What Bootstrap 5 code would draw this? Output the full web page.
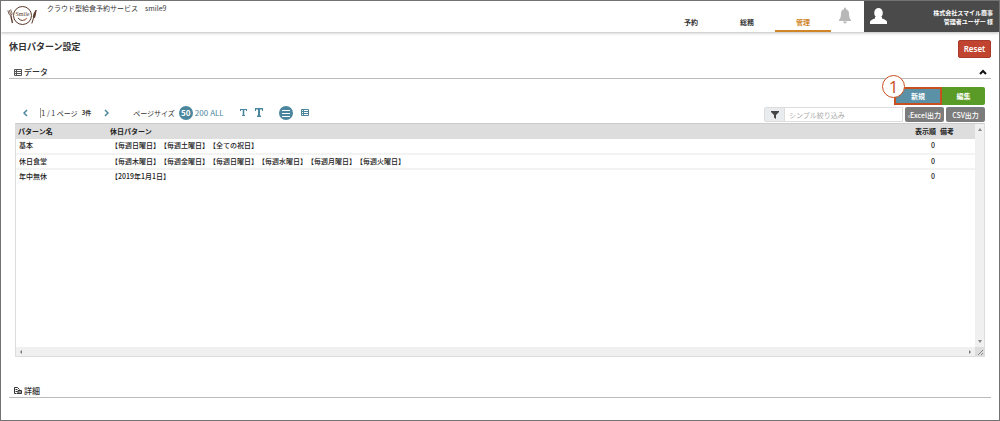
<!DOCTYPE html>
<html lang="ja">
<head>
<meta charset="utf-8">
<meta name="viewport" content="width=device-width, initial-scale=1">
<title>休日パターン設定</title>
<link href="https://cdn.jsdelivr.net/npm/bootstrap@5.3.0/dist/css/bootstrap.min.css" rel="stylesheet">
<style>
:root{--teal:#4a869d;--ink:#333;--orange:#c8501e}
body{font:7px/10px "Noto Sans CJK JP","Noto Sans",sans-serif;color:var(--ink);border:1px solid #737373;min-height:100vh;text-spacing-trim:space-all}
svg{display:block;flex:none}
.topbar{height:31px;box-shadow:0 1px 3px #bbb}
.topbar .brand-logo{margin:3px 10px 0 6px}
.service{padding-top:2px}
.mainnav .nav-link{width:56px;height:31px;padding:16px 0 0;text-align:center;color:#333;font-weight:700;line-height:10px;border-bottom:2px solid transparent}
.mainnav .nav-link.active{color:#d08528;border-color:#d08528}
.bell{width:33px;padding:6px 0 0 8px}
.userbox{width:135px;background:#4a4a4a;color:#fff;font-size:6px;line-height:9px;font-weight:700;padding:0 6px}
main{padding:8px 8px 0}
h1{font-size:9px;line-height:14px;font-weight:700;margin:0}
.flat{border:0;border-radius:2px;color:#fff;font-size:7px;line-height:10px;font-weight:700;padding:0;text-align:center}
.reset{background:#c0442f;border:1px solid #a93a29;width:33px;height:18px;font-size:8px;line-height:14px;font-family:"Noto Sans",sans-serif;font-weight:600}
.section-head{font-size:8px;line-height:12px;font-weight:500;border-bottom:1px solid #bbb;padding:0 4px 0 5px;margin:0;gap:2px}
.panel{padding:8px 6px 0}
.new-wrap{position:relative}
.new{background:#5a91a7;border:2px solid var(--orange);border-radius:0;width:48px;height:18px}
.edit{background:#5a9a27;width:43px;height:18px;border-radius:0 2px 2px 0}
.step{position:absolute;left:-12px;top:-12px;width:23px;height:23px;border:1px solid var(--orange);border-radius:50%;background:#fff;color:var(--orange);font:17px/21px "Open Sans",sans-serif;text-align:center}
.tools{height:17px;margin-top:1px;gap:2px}
.pager{height:14px;margin-bottom:4px}
.plain{border:0;background:none;padding:0;color:var(--teal);font-size:8px;line-height:10px}
.round{width:14px;height:14px;border-radius:50%;background:var(--teal);color:#fff;font-weight:700;display:flex;align-items:center;justify-content:center}
.pageno{width:5px;border:0;border-left:1px solid #999;padding:0;font-size:8px;line-height:10px;height:10px;color:#444}
.total{font-size:6px;font-weight:700}
.gap-a{margin-left:13px}
.gap-b{margin-left:2px}
.filter{width:139px;height:15px}
.filter .input-group-text{width:21px;padding:0 0 0 6px;background:#e9ecef;border-radius:2px 0 0 2px;border-color:#ddd}
.filter .form-control{font-size:7px;line-height:10px;padding:0 4px;border-color:#ddd;border-radius:0;min-height:0}
.filter .form-control::placeholder{color:#aaa}
.export{background:#7c7c7c;height:15px;width:39px;font-weight:500}
.gridbox{border:1px solid #ddd;border-top-color:#ccc;display:grid;grid-template-columns:1fr 9px;grid-template-rows:minmax(223px,1fr) 9px}
.grid-data{--bs-table-bg:transparent;margin:0;color:#222;font-weight:500;table-layout:fixed}
.grid-data th{background:#ddd;height:15px;padding:1px 2px;line-height:13px;border:0;font-weight:700}
.grid-data td{height:15px;padding:0 3px;line-height:13px;border:0;border-bottom:2px solid #f3f3f3}
.grid-data tr:last-child td{border-color:transparent}
.bar{background:#f0f0f0;color:#777}
.grip{background:#ddd}
.detail{margin-top:28px}
</style>
</head>
<body>
<header class="topbar d-flex">
  <svg class="brand-logo" width="30" height="24" viewBox="0 0 30 24" fill="none" stroke="#5b3a2b">
    <circle cx="15.500" cy="11.500" r="9" stroke-width="1"/>
    <path d="M11 14q4.500 5 9 0" stroke-width="1"/><path d="M16 16.500q3 0 4-2.500" stroke="#d98a6a"/>
    <path d="M.8 6.500l1.400 4q1.200 1.500 2.300.5t.2-2.500L3.600 5.500M2.200 6l1.400 4.500" stroke-width=".8"/><path d="M3.800 11.500l1.700 7.500" stroke-width="1.300"/>
    <path d="M29.200 6q-2.500 3-3 7l1.500.5zM26.800 13l-2 6.500" fill="#5b3a2b" stroke-width="1"/>
    <text x="15.500" y="12" text-anchor="middle" font-family="Liberation Serif,serif" font-size="6" fill="#5b3a2b" stroke="none">Smile</text>
  </svg>
  <div class="service">クラウド型給食予約サービス　smile9</div>
  <nav class="mainnav nav ms-auto flex-nowrap">
    <a class="nav-link" href="#">予約</a><a class="nav-link" href="#">総務</a><a class="nav-link active" href="#" aria-current="page">管理</a>
  </nav>
  <div class="bell"><svg width="12" height="17" viewBox="0 0 12 17" fill="#b8b8b8"><path d="M5 1.500a1 1 0 0 1 2 0v.7c2 .5 3 2 3 4.300 0 3 .5 5 2 6.500v1H0v-1c1.500-1.500 2-3.500 2-6.500 0-2.300 1-3.800 3-4.300zM4 14.500h4q-.5 2-2 2t-2-2z"/></svg></div>
  <div class="userbox d-flex align-items-center justify-content-between">
    <svg width="17" height="17" viewBox="0 0 17 17" fill="#fff"><ellipse cx="8.500" cy="5" rx="4.300" ry="5"/><path d="M0 16v-2q0-2 5-3.500V9h7v1.500q5 1.500 5 3.500v2z"/></svg>
    <div class="text-end">株式会社スマイル商事<br>管理者ユーザー 様</div>
  </div>
</header>
<main>
  <div class="d-flex justify-content-between">
    <h1>休日パターン設定</h1>
    <button class="flat reset" type="button">Reset</button>
  </div>
  <h2 class="section-head d-flex align-items-center mt-2">
    <svg width="8" height="7" viewBox="0 0 8 7" fill="none" stroke="#555"><path d="M.5.500h7v6h-7zM2.500.500v6M.5 2.500h7M.5 4.500h7"/></svg>データ
    <svg class="ms-auto" width="8" height="6" viewBox="0 0 8 6" fill="none" stroke="#111" stroke-width="2"><path d="M1 5l3-3 3 3"/></svg>
  </h2>
  <div class="panel">
    <div class="d-flex justify-content-end">
      <div class="new-wrap"><button class="flat new d-block" type="button">新規</button><span class="step">1</span></div>
      <button class="flat edit" type="button">編集</button>
    </div>
    <div class="tools d-flex align-items-center">
      <div class="pager d-flex align-items-center">
      <button class="plain ms-2" type="button" aria-label="前のページ"><svg width="5" height="8" viewBox="0 0 5 8" fill="none" stroke="#4a869d" stroke-width="1.500"><path d="M4 1L1 4l3 3"/></svg></button>
      <div class="d-flex align-items-center ms-2 ps-1"><input class="pageno" type="text" value="1" aria-label="ページ番号"><span class="gap-b">/ 1 ページ</span><span class="total ms-1">3件</span></div>
      <button class="plain gap-a" type="button" aria-label="次のページ"><svg width="5" height="8" viewBox="0 0 5 8" fill="none" stroke="#4a869d" stroke-width="1.500"><path d="M1 1l3 3-3 3"/></svg></button>
      <span class="ms-4">ページサイズ</span>
      <button class="plain round ms-1" type="button">50</button>
      <button class="plain gap-b" type="button">200</button>
      <button class="plain gap-b" type="button">ALL</button>
      <button class="plain ms-3" type="button" aria-label="小さい文字"><svg width="7" height="7" viewBox="0 0 7 7" fill="#4a869d"><path d="M0 0h7v2H6V1H4.300v5H5v1H2V6h.7V1H1v1H0z"/></svg></button>
      <button class="plain ms-2" type="button" aria-label="大きい文字"><svg width="8" height="9" viewBox="0 0 8 9" fill="#4a869d"><path d="M0 0h8v3H7V1.500H5v6h1V9H2V7.500h1v-6H1V3H0z"/></svg></button>
      <button class="plain round ms-3" type="button" aria-label="一覧"><svg width="8" height="8" viewBox="0 0 8 8" stroke="#fff" stroke-width="1"><path d="M0 1.500h8M0 4.500h8M0 7.500h8"/></svg></button>
      <button class="plain ms-1 ps-1" type="button" aria-label="表"><svg width="8" height="7" viewBox="0 0 8 7" fill="none" stroke="#4a869d"><path d="M.5.500h7v6h-7zM2.500.500v6M.5 2.500h7M.5 4.500h7"/></svg></button>
      </div>
      <div class="filter input-group flex-nowrap ms-auto">
        <span class="input-group-text"><svg width="8" height="8" viewBox="0 0 8 8" fill="#444"><path d="M0 0h8v1L5 4v4L3 6.500V4L0 1z"/></svg></span>
        <input class="form-control" type="text" placeholder="シンプル絞り込み" aria-label="シンプル絞り込み">
      </div>
      <button class="flat export" type="button">‹Excel出力</button>
      <button class="flat export" type="button">CSV出力</button>
    </div>
    <div class="gridbox">
      <div>
      <table class="table grid-data">
        <colgroup><col style="width:92px"><col><col style="width:40px"><col style="width:37px"></colgroup>
        <thead><tr><th>パターン名</th><th>休日パターン</th><th class="text-end">表示順</th><th>備考</th></tr></thead>
        <tbody>
          <tr><td>基本</td><td>【毎週日曜日】【毎週土曜日】【全ての祝日】</td><td class="text-end">0</td><td></td></tr>
          <tr><td>休日食堂</td><td>【毎週木曜日】【毎週金曜日】【毎週日曜日】【毎週水曜日】【毎週月曜日】【毎週火曜日】</td><td class="text-end">0</td><td></td></tr>
          <tr><td>年中無休</td><td>【2019年1月1日】</td><td class="text-end">0</td><td></td></tr>
        </tbody>
      </table>
      </div>
      <div class="bar d-flex flex-column justify-content-between align-items-center py-1">
        <svg width="4" height="3" viewBox="0 0 4 3" fill="#888"><path d="M0 3l2-3 2 3z"/></svg><svg width="4" height="3" viewBox="0 0 4 3" fill="#888"><path d="M0 0l2 3 2-3z"/></svg>
      </div>
      <div class="bar d-flex justify-content-between align-items-center px-1">
        <svg width="2" height="4" viewBox="0 0 2 4" fill="#777"><path d="M2 0L0 2l2 2z"/></svg><svg width="2" height="4" viewBox="0 0 2 4" fill="#777"><path d="M0 0l2 2-2 2z"/></svg>
      </div>
      <div class="grip"><svg width="9" height="9" viewBox="0 0 9 9" stroke="#888"><path d="M3 8l5-5M6 8l2-2"/></svg></div>
    </div>
  </div>
  <h2 class="section-head detail d-flex align-items-center">
    <svg width="8" height="8" viewBox="0 0 8 8" fill="none" stroke="#333"><path d="M.5.500h3l2 2M.5.500v6h2M1.500 2.500h2M1.500 4.500h2M3 6.500h4.500v-3H4v3M4 5h3"/></svg>詳細
  </h2>
</main>
<script src="https://cdn.jsdelivr.net/npm/bootstrap@5.3.0/dist/js/bootstrap.bundle.min.js"></script>
</body>
</html>
